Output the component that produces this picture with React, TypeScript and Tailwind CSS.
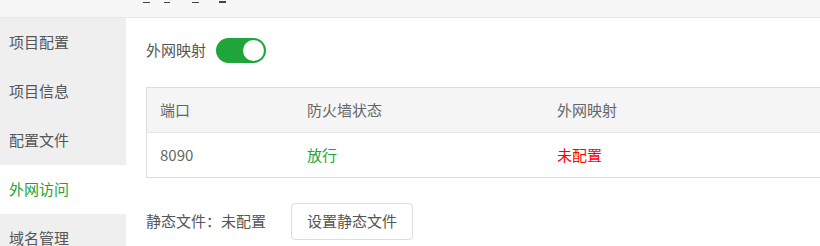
import { useState } from "react";

const menu = ["项目配置", "项目信息", "配置文件", "外网访问", "域名管理"];

export default function App() {
  const [active, setActive] = useState("外网访问");
  const [mapped, setMapped] = useState(true);

  return (
    <div
      className="flex h-[246px] w-[820px] flex-col overflow-hidden bg-white text-[15px] text-[#555]"
      style={{ fontFamily: '"Microsoft YaHei", "Noto Sans CJK SC", "Noto Sans", sans-serif' }}
    >
      {/* title bar, scrolled mostly out of view */}
      <div className="flex h-[18px] shrink-0 border-b border-[#e6e6e6] bg-[#f7f7f7]">
        <div className="flex h-[3px] items-end gap-[14px] pl-[143px]">
          <span className="h-px w-[7px] bg-[#444]" />
          <span className="h-px w-[6px] bg-[#444]" />
          <span className="ml-[8px] h-px w-[7px] bg-[#444]" />
          <span className="ml-[6px] h-[2px] w-[7px] bg-[#444]" />
        </div>
      </div>

      <div className="flex min-h-0 flex-1">
        <ul className="w-[126px] shrink-0 bg-[#efefef]">
          {menu.map((item) => (
            <li
              key={item}
              onClick={() => setActive(item)}
              className={
                item === active
                  ? "flex h-[49px] cursor-pointer items-center bg-white pl-[9px] text-[#20a53a]"
                  : "flex h-[49px] cursor-pointer items-center pl-[9px]"
              }
            >
              {item}
            </li>
          ))}
        </ul>

        <div className="flex min-w-0 flex-1 flex-col pl-[20px] pt-[19px]">
          <div className="flex h-[26px] items-center gap-[10px]">
            <span>外网映射</span>
            <button
              type="button"
              onClick={() => setMapped((v) => !v)}
              className={
                mapped
                  ? "flex h-[25px] w-[50px] items-center justify-end rounded-full bg-[#20a53a] px-[2px]"
                  : "flex h-[25px] w-[50px] items-center justify-start rounded-full bg-[#ccc] px-[2px]"
              }
            >
              <span className="h-[21px] w-[21px] rounded-full bg-white" />
            </button>
          </div>

          <div className="mt-[24px] w-[720px] border border-[#ddd] border-r-0">
            <div className="flex h-[45px] items-center border-b border-[#e6e6e6] bg-[#f5f5f5] text-[#666]">
              <div className="w-[160px] pl-[13px]">端口</div>
              <div className="w-[250px]">防火墙状态</div>
              <div>外网映射</div>
            </div>
            <div className="flex h-[44px] items-center text-[#666]">
              <div className="w-[160px] pl-[13px]">8090</div>
              <div className="w-[250px] text-[#20a53a]">放行</div>
              <div className="text-[#ff0000]">未配置</div>
            </div>
          </div>

          <div className="mt-[25px] flex items-center gap-[25px]">
            <span>静态文件：未配置</span>
            <button
              type="button"
              className="h-[37px] w-[122px] rounded-[4px] border border-[#ddd] bg-white text-[15px] text-[#555]"
            >
              设置静态文件
            </button>
          </div>
        </div>
      </div>
    </div>
  );
}
